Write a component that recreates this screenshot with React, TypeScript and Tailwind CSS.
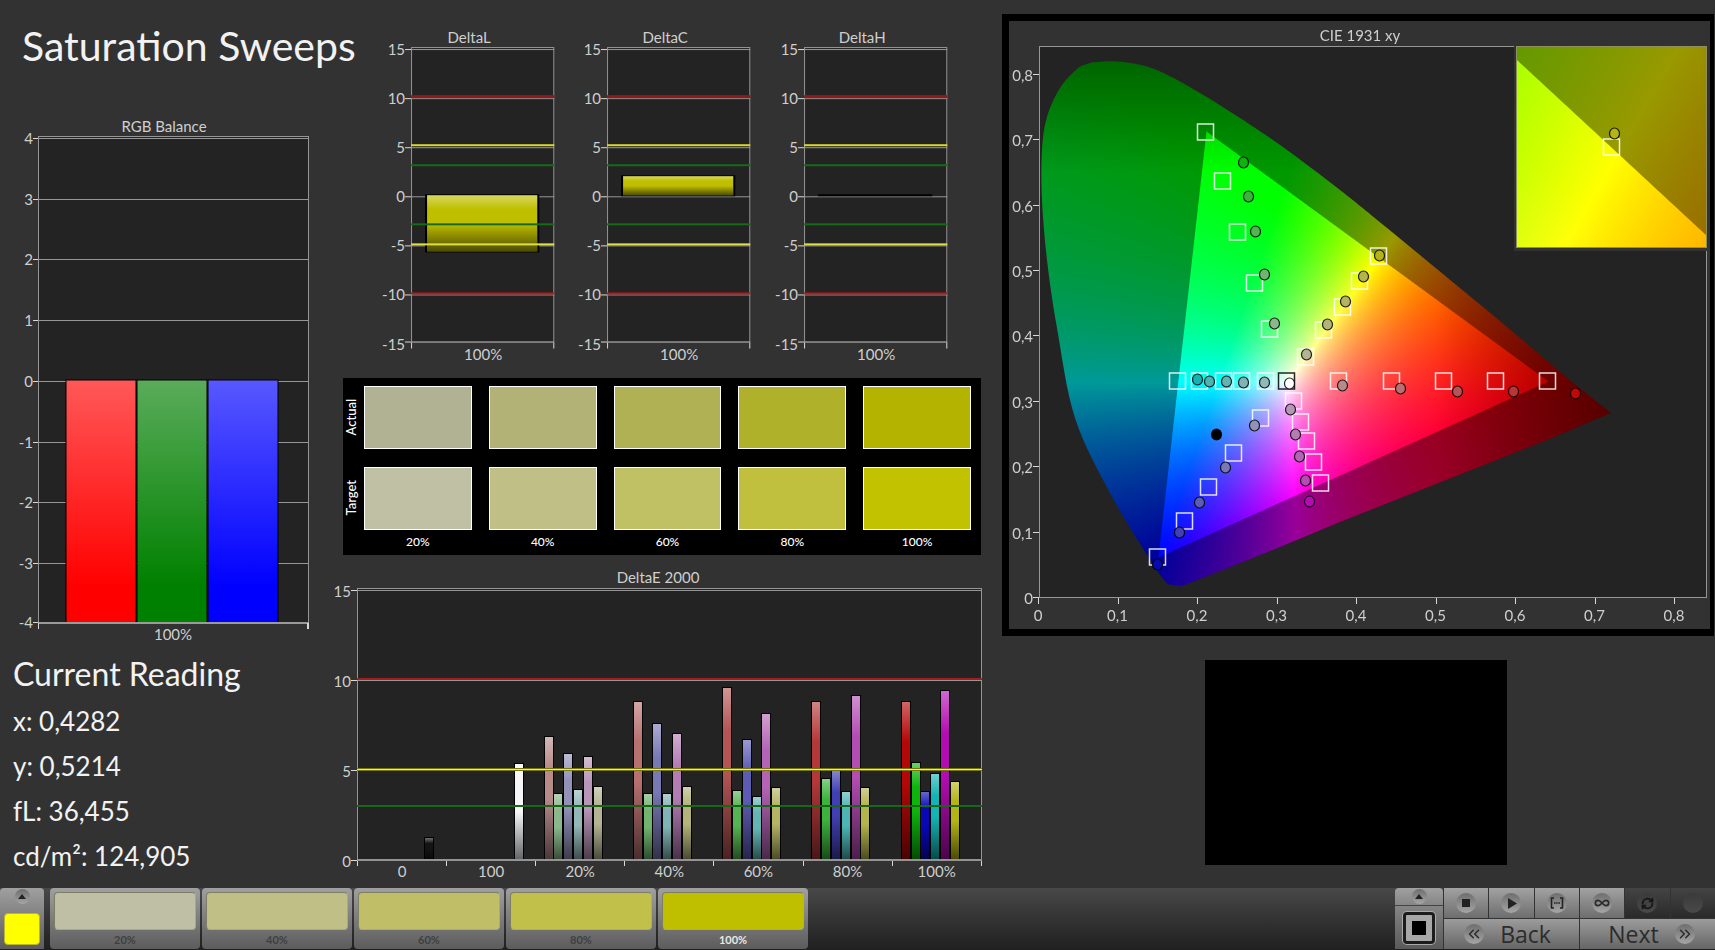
import { useLayoutEffect, useRef } from "react";
import type { ReactNode } from "react";
import { ChevronsLeft, ChevronsRight, Infinity as InfinityIcon, RefreshCw } from "lucide-react";

type Point = [number, number];

const GRID = "#969696";
const TICK = "#d8d8d8";
const PLOT = "#232323";
const LABEL = "#cfcfcf";

const range = (n: number) => Array.from({ length: n }, (_, i) => i);

function Label({ x, y, anchor = "middle", children }: { x: number; y: number; anchor?: "start" | "middle" | "end"; children: ReactNode }) {
  return (
    <text x={x} y={y} textAnchor={anchor} fill={LABEL} className="text-[15px]">
      {children}
    </text>
  );
}

function HLine({ x1, x2, y, color = GRID, width = 1 }: { x1: number; x2: number; y: number; color?: string; width?: number }) {
  return <rect x={x1} y={y} width={x2 - x1} height={width} fill={color} />;
}

/* Glossy shading laid over every bar */
function Gloss({ id }: { id: string }) {
  return (
    <linearGradient id={id} x1="0" y1="0" x2="0" y2="1">
      <stop offset="0" stopColor="#fff" stopOpacity="0.38" />
      <stop offset="0.25" stopColor="#fff" stopOpacity="0" />
      <stop offset="0.5" stopColor="#000" stopOpacity="0" />
      <stop offset="1" stopColor="#000" stopOpacity="0.6" />
    </linearGradient>
  );
}

function RgbBalance() {
  const bars = [
    { id: "r", x: 66, from: "#ff5858", to: "#ff0000" },
    { id: "g", x: 137, from: "#5aac5a", to: "#008000" },
    { id: "b", x: 208, from: "#5858ff", to: "#0000ff" },
  ];
  return (
    <svg viewBox="0 110 320 540" className="w-full" role="img" aria-label="RGB Balance">
      <defs>
        {bars.map((b) => (
          <linearGradient key={b.id} id={`rgb-${b.id}`} x1="0" y1="0" x2="0" y2="1">
            <stop offset="0" stopColor={b.from} />
            <stop offset="0.85" stopColor={b.to} />
          </linearGradient>
        ))}
      </defs>
      <Label x={164} y={132}>RGB Balance</Label>
      <rect x={38} y={136} width={271} height={487} fill={PLOT} />
      {range(9).map((i) => {
        const y = Math.min(Math.round(138 + i * 60.7), 622);
        return (
          <g key={i}>
            <HLine x1={33} x2={38} y={y} color={TICK} />
            <HLine x1={38} x2={309} y={y} />
            <Label x={33} y={y + 6} anchor="end">{4 - i}</Label>
          </g>
        );
      })}
      {bars.map((b) => (
        <rect key={b.id} x={b.x} y={380} width={70} height={243} fill={`url(#rgb-${b.id})`} stroke="#000" />
      ))}
      <rect x={38.5} y={136.5} width={270} height={486} fill="none" stroke={GRID} />
      <HLine x1={38} x2={309} y={622} width={2} color="#9a9a9a" />
      <rect x={38} y={623} width={1} height={6} fill={TICK} />
      <rect x={307} y={623} width={2} height={6} fill={TICK} />
      <Label x={173} y={640}>100%</Label>
    </svg>
  );
}

const LIMITS = [
  { y: 95, color: "#8e1a1a", width: 3 },
  { y: 144, color: "#d8d82e", width: 2 },
  { y: 164, color: "#176a17", width: 2 },
  { y: 223, color: "#176a17", width: 2 },
  { y: 243, color: "#dede48", width: 2 },
  { y: 292, color: "#b01c1c", width: 2 },
];

function DeltaChart({ title, top, bottom }: { title: string; top: number; bottom: number }) {
  return (
    <svg viewBox="0 24 196 350" className="w-full" role="img" aria-label={title}>
      <defs>
        <Gloss id={`gloss-${title}`} />
      </defs>
      <Label x={93} y={43}>{title}</Label>
      <rect x={35} y={47} width={143} height={295} fill={PLOT} />
      {range(7).map((i) => {
        const y = i === 6 ? 341 : 49 + i * 49;
        return (
          <g key={i}>
            <HLine x1={29} x2={35} y={y} color={TICK} />
            <HLine x1={35} x2={178} y={y} />
            <Label x={29} y={49 + i * 49 + 6} anchor="end">{15 - i * 5}</Label>
          </g>
        );
      })}
      <rect x={35.5} y={47.5} width={142} height={294} fill="none" stroke={GRID} />
      <rect x={49} y={top} width={114} height={bottom - top} fill="#000" />
      {bottom - top > 3 && (
        <>
          <rect x={51} y={top + 1} width={110} height={bottom - top - 2} fill="#bfbf00" />
          <rect x={51} y={top + 1} width={110} height={bottom - top - 2} fill={`url(#gloss-${title})`} />
        </>
      )}
      {LIMITS.map((l) => (
        <HLine key={l.y} x1={35} x2={178} y={l.y} color={l.color} width={l.width} />
      ))}
      <rect x={35} y={342} width={1} height={6} fill={TICK} />
      <rect x={177} y={342} width={1} height={6} fill={TICK} />
      <Label x={107} y={359}>100%</Label>
    </svg>
  );
}

const LEVELS = ["20%", "40%", "60%", "80%", "100%"];
const ACTUAL = ["bg-[#b1b194]", "bg-[#b2b276]", "bg-[#b0b154]", "bg-[#b0b12b]", "bg-[#b3b300]"];
const TARGET = ["bg-[#c0c0a5]", "bg-[#c0bf86]", "bg-[#c0c065]", "bg-[#c0c03e]", "bg-[#c2c200]"];

function Swatches() {
  const rows = [
    { name: "Actual", fills: ACTUAL },
    { name: "Target", fills: TARGET },
  ];
  return (
    <section className="mt-[3px] mr-[21px] ml-[23px] bg-black pt-2 pr-[10px] pb-1 text-white">
      <div className="flex flex-col gap-[18px]">
        {rows.map((row) => (
          <div key={row.name} className="flex">
            <div className="flex w-[21px] items-center">
              <span className="rotate-180 text-[13px] leading-4 font-medium [writing-mode:vertical-rl]">{row.name}</span>
            </div>
            <div className="grid flex-1 grid-cols-5 gap-[17px]">
              {row.fills.map((fill) => (
                <div key={fill} className={`h-[63px] border border-white ${fill}`} />
              ))}
            </div>
          </div>
        ))}
      </div>
      <div className="ml-[21px] grid grid-cols-5 gap-[17px] pt-[3px] text-center text-[12px] leading-[18px] font-medium">
        {LEVELS.map((l) => (
          <span key={l}>{l}</span>
        ))}
      </div>
    </section>
  );
}

const GROUPS = [
  { values: [6.93, 3.76, 5.98, 4.02, 5.81, 4.19], colors: ["#b88a8a", "#8ab88a", "#9292b8", "#94b8b8", "#b896b8", "#b4b494"] },
  { values: [8.89, 3.76, 7.67, 3.76, 7.09, 4.19], colors: ["#b87070", "#70b470", "#7878b4", "#80b4b4", "#b47cb4", "#b4b47a"] },
  { values: [9.65, 3.93, 6.76, 3.59, 8.2, 4.09], colors: ["#b45454", "#54b454", "#5c5cb4", "#64b4b4", "#b464b4", "#b4b464"] },
  { values: [8.89, 4.59, 5.09, 3.87, 9.2, 4.09], colors: ["#b43838", "#3cb43c", "#4040b4", "#4cb4b4", "#b44cb4", "#b4b44c"] },
  { values: [8.89, 5.5, 3.87, 4.87, 9.48, 4.43], colors: ["#b40808", "#0cb40c", "#0808b4", "#14b4b4", "#b40cb4", "#b4b414"] },
];

function DeltaE() {
  const bars = [
    { x: 424, value: 1.31, color: "#141414" },
    { x: 514, value: 5.43, color: "#f4f6f8" },
    ...GROUPS.flatMap((g, gi) =>
      g.values.map((value, i) => ({ x: Math.round(543.5 + gi * 89.3 + i * 9.8), value, color: g.colors[i] })),
    ),
  ];
  return (
    <svg viewBox="320 555 682 330" className="w-full" role="img" aria-label="DeltaE 2000">
      <defs>
        <Gloss id="gloss-e" />
      </defs>
      <Label x={658} y={583}>DeltaE 2000</Label>
      <rect x={357} y={588} width={625} height={273} fill={PLOT} />
      {range(4).map((i) => {
        const y = i === 3 ? 860 : 590 + i * 90;
        return (
          <g key={i}>
            <HLine x1={351} x2={357} y={y} color={TICK} />
            <HLine x1={357} x2={982} y={y} />
            <Label x={351} y={597 + i * 90} anchor="end">{15 - i * 5}</Label>
          </g>
        );
      })}
      <rect x={357.5} y={588.5} width={624} height={272} fill="none" stroke={GRID} />
      {bars.map((b) => {
        const y = Math.round(861 - b.value * 18);
        return (
          <g key={b.x}>
            <rect x={b.x} y={y} width={10} height={860 - y} fill="#000" />
            <rect x={b.x + 1} y={y + 1} width={8} height={859 - y} fill={b.color} />
            <rect x={b.x + 1} y={y + 1} width={8} height={859 - y} fill="url(#gloss-e)" />
          </g>
        );
      })}
      <HLine x1={357} x2={982} y={678} color="#a81c1c" width={2} />
      <HLine x1={357} x2={982} y={768} color="#77770c" width={3} />
      <HLine x1={357} x2={982} y={769} color="#f0f060" />
      <HLine x1={357} x2={982} y={805} color="#186618" width={2} />
      <HLine x1={357} x2={982} y={859} color="#949494" width={2} />
      {range(8).map((i) => (
        <rect key={i} x={Math.round(357 + i * 89.1)} y={861} width={1} height={5} fill={TICK} />
      ))}
      {["0", "100", ...LEVELS].map((l, i) => (
        <Label key={i} x={402 + i * 89.1} y={877}>{l}</Label>
      ))}
    </svg>
  );
}

/* Chromaticity diagram */

const ORIGIN: Point = [1039, 597];
const SCALE: Point = [794.4, 654.3];
const GREEN: Point = [1206, 131];
const RED: Point = [1548, 381];
const BLUE: Point = [1158, 557];

const LOCUS: Point[] = [
  [1097, 62], [1123, 62], [1157, 70], [1200, 93], [1240, 118], [1283, 147], [1340, 190], [1392, 232],
  [1500, 321], [1573, 383], [1611, 413], [1547, 440], [1340, 522], [1280, 547], [1187, 584], [1180, 585],
  [1172, 585], [1165, 581], [1147, 555], [1110, 493], [1075, 418], [1057, 328], [1047, 260], [1042, 200],
  [1042, 150], [1047, 117], [1060, 88], [1077, 69], [1087, 64],
];

// linear sRGB from xy, brightest channel scaled to one, darker towards deep green and deep red
function chroma(x: number, y: number) {
  const z = 1 - x - y;
  const rgb = [
    3.2406 * x - 1.5372 * y - 0.4986 * z,
    -0.9689 * x + 1.8758 * y + 0.0415 * z,
    0.0557 * x - 0.204 * y + 1.057 * z,
  ].map((v) => Math.max(v, 0));
  const max = Math.max(...rgb);
  const fade = (1 - Math.max(0, x - 0.5) * 2) * (1 - Math.max(0, y - 0.65) * 2);
  return rgb.map((v) => (v / max) * 255 * fade);
}

// signed distance in pixels, positive to the right of a -> b on screen
function side(a: Point, b: Point, x: number, y: number) {
  const dx = b[0] - a[0];
  const dy = b[1] - a[1];
  return (dx * (y - a[1]) - dy * (x - a[0])) / Math.hypot(dx, dy);
}

const clamp = (v: number) => Math.min(1, Math.max(0, v));

function paint(
  canvas: HTMLCanvasElement | null,
  toXY: (px: number, py: number) => Point,
  inside: (px: number, py: number) => number,
) {
  const ctx = canvas?.getContext("2d");
  if (!canvas || !ctx) return;
  const { width, height } = canvas;
  const image = ctx.createImageData(width, height);
  for (let py = 0; py < height; py++) {
    for (let px = 0; px < width; px++) {
      const [x, y] = toXY(px, py);
      const level = 0.6 + 0.4 * clamp(inside(px, py) + 0.5);
      const [r, g, b] = chroma(x, y);
      image.data.set([r * level, g * level, b * level, 255], (py * width + px) * 4);
    }
  }
  ctx.putImageData(image, 0, 0);
}

function locusPath() {
  const n = LOCUS.length;
  const at = (i: number): Point => {
    const [x, y] = LOCUS[(i + n) % n];
    return [x - 1009, y - 21];
  };
  const path = new Path2D();
  path.moveTo(...at(0));
  for (let i = 0; i < n; i++) {
    const [p0, p1, p2, p3] = [at(i - 1), at(i), at(i + 1), at(i + 2)];
    // straight segments around the red tip
    if (i >= 7 && i <= 12) {
      path.lineTo(...p2);
      continue;
    }
    path.bezierCurveTo(
      p1[0] + (p2[0] - p0[0]) / 6, p1[1] + (p2[1] - p0[1]) / 6,
      p2[0] - (p3[0] - p1[0]) / 6, p2[1] - (p3[1] - p1[1]) / 6,
      p2[0], p2[1],
    );
  }
  path.closePath();
  return path;
}

const TARGETS: Point[] = [
  [1205, 132], [1222, 181], [1237, 232], [1254, 283], [1269, 329],
  [1378, 256], [1359, 281], [1342, 307], [1323, 330], [1305, 357],
  [1177, 381], [1199, 381], [1223, 381], [1241, 381], [1265, 381],
  [1338, 381], [1391, 381], [1443, 381], [1495, 381], [1547, 381],
  [1293, 401], [1300, 422], [1306, 441], [1313, 462], [1320, 483],
  [1260, 418], [1233, 453], [1208, 487], [1184, 521], [1157, 557],
];

const READINGS: [number, number, string][] = [
  [1243, 162, "#0cb40c"], [1248, 196, "#3cb43c"], [1255, 231, "#54b454"], [1264, 274, "#70b470"], [1274, 323, "#8ab88a"],
  [1379, 255, "#b4b414"], [1363, 276, "#b4b44c"], [1345, 301, "#b4b464"], [1327, 324, "#b4b47a"], [1306, 354, "#b4b494"],
  [1197, 379, "#14b4b4"], [1209, 381, "#4cb4b4"], [1226, 381, "#64b4b4"], [1243, 382, "#80b4b4"], [1264, 382, "#94b8b8"],
  [1342, 385, "#b88a8a"], [1400, 388, "#b87070"], [1457, 391, "#b45454"], [1513, 391, "#b43838"], [1575, 393, "#c00808"],
  [1290, 409, "#b896b8"], [1295, 434, "#b47cb4"], [1299, 456, "#b464b4"], [1305, 480, "#b44cb4"], [1309, 501, "#b40cb4"],
  [1254, 425, "#9292b8"], [1225, 467, "#7878b4"], [1199, 502, "#5c5cb4"], [1179, 532, "#4040b4"], [1157, 564, "#0808b4"],
  [1216, 434, "#000000"],
];

function Target({ x, y, color = "#fff" }: { x: number; y: number; color?: string }) {
  return <rect x={x - 7.5} y={y - 8} width={16} height={16} fill="none" stroke={color} strokeOpacity={0.85} strokeWidth={1.5} />;
}

function Reading({ x, y, fill }: { x: number; y: number; fill: string }) {
  return <ellipse cx={x + 0.5} cy={y + 0.5} rx={5} ry={5.5} fill={fill} stroke="#000" strokeOpacity={0.85} strokeWidth={1.2} />;
}

function Chromaticity() {
  const main = useRef<HTMLCanvasElement>(null);
  const inset = useRef<HTMLCanvasElement>(null);

  useLayoutEffect(() => {
    paint(
      main.current,
      (px, py) => [(px + 1009 - ORIGIN[0]) / SCALE[0], (ORIGIN[1] - py - 21) / SCALE[1]],
      (px, py) => {
        const x = px + 1009;
        const y = py + 21;
        return Math.min(side(GREEN, RED, x, y), side(RED, BLUE, x, y), side(BLUE, GREEN, x, y));
      },
    );
    const ctx = main.current?.getContext("2d");
    if (ctx) {
      ctx.globalCompositeOperation = "destination-in";
      ctx.fill(locusPath());
      ctx.globalCompositeOperation = "source-over";
    }
    paint(
      inset.current,
      (px, py) => [0.4262 + (px - 95) * 0.00029, 0.5205 - (py - 101) * 0.000275],
      (px, py) => side([0, 13], [189, 188], px, py),
    );
  }, []);

  return (
    <section className="relative mt-[14px] mr-px border-[7px] border-r-4 border-black">
      <svg viewBox="1009 21 701 608" className="w-full" aria-hidden="true">
        <rect x={1039.5} y={46.5} width={667} height={551} fill={PLOT} stroke={GRID} />
      </svg>
      <canvas ref={main} width={701} height={608} className="absolute inset-0 size-full" />
      <svg viewBox="1009 21 701 608" className="absolute inset-0 size-full" role="img" aria-label="CIE 1931 xy">
        <Label x={1360} y={41}>CIE 1931 xy</Label>
        {range(9).map((i) => (
          <g key={i}>
            <HLine x1={1033} x2={1039} y={Math.round(597 - i * 65.4)} color={TICK} />
            <Label x={1033} y={604 - i * 65.4} anchor="end">{i ? `0,${i}` : "0"}</Label>
            <rect x={Math.round(1038 + i * 79.5)} y={598} width={1} height={6} fill={TICK} />
            <Label x={1038 + i * 79.5} y={621}>{i ? `0,${i}` : "0"}</Label>
          </g>
        ))}
        {TARGETS.map(([x, y]) => (
          <Target key={`${x}-${y}`} x={x} y={y} />
        ))}
        <Target x={1286} y={381} color="#000" />
        {READINGS.map(([x, y, fill]) => (
          <Reading key={`${x}-${y}`} x={x} y={y} fill={fill} />
        ))}
        <Reading x={1289} y={383} fill="#fff" />
        <rect x={1514} y={46} width={196} height={205} fill="#323232" />
        <rect x={1516} y={46} width={191} height={202} fill="#8f8f5c" />
        <foreignObject x={1517} y={47} width={189} height={200}>
          <canvas ref={inset} width={189} height={200} className="block" />
        </foreignObject>
        <Target x={1611} y={147} />
        <Reading x={1614} y={133} fill="#b4b414" />
      </svg>
    </section>
  );
}

function Measure({ name, value }: { name: string; value: string }) {
  return (
    <p className="text-[26px] leading-[45px]">
      {name}: {value}
    </p>
  );
}

const FILMSTRIP = ["bg-[#bfbfa5]", "bg-[#c0bf86]", "bg-[#c0bf68]", "bg-[#c0c04a]", "bg-[#bfbf00]"];

function Knob({ small, dim, children }: { small?: boolean; dim?: boolean; children?: ReactNode }) {
  return (
    <span
      className={`flex items-center justify-center rounded-full bg-linear-to-b text-[#2b2b2b] ${small ? "size-[15px]" : "size-5"} ${
        dim ? "from-[#3a3a3a] to-[#4a4a4a]" : "from-[#6e6e6e] to-[#a6a6a6]"
      }`}
    >
      {children}
    </span>
  );
}

function UpArrow() {
  return (
    <svg viewBox="0 0 10 6" className="h-[5px] w-2" aria-hidden="true">
      <path d="M5 0 10 6H0z" fill="#222" />
    </svg>
  );
}

const SILVER = "bg-linear-to-b from-[#a0a0a0] to-[#5c5c5c]";
const KEY = "flex flex-1 items-center justify-center border-l border-[#333] bg-linear-to-b";

function Footer() {
  return (
    <footer className="mt-auto flex justify-between bg-linear-to-b from-[#484848] to-[#202020] pb-px">
      <div className="flex">
        <button className={`mr-1.5 flex w-11 flex-col items-center rounded-t-sm pt-[1px] ${SILVER}`} aria-label="Show colour">
          <Knob small>
            <UpArrow />
          </Knob>
          <span className="mt-[9px] h-8 w-9 rounded-sm border border-[#b8b82e] bg-[#ffff00]" />
        </button>
        <div className="flex gap-0.5">
          {LEVELS.map((l, i) => (
            <button key={l} className={`w-[150px] rounded-sm px-1 pt-1 ${SILVER}`}>
              <span className={`block h-[38px] rounded-sm border border-[#7e7e66] border-r-[#a8a890] border-b-[#a8a890] ${FILMSTRIP[i]}`} />
              <span className={`block h-[19px] text-[11px] leading-5 font-bold ${i === 4 ? "text-[#e8e8e8]" : "text-[#404040]"}`}>{l}</span>
            </button>
          ))}
        </div>
      </div>
      <div className="flex w-80">
        <div className="flex w-12 flex-col">
          <button className="flex h-[18px] items-center justify-center rounded-t-sm border-b border-[#444] bg-linear-to-b from-[#a0a0a0] to-[#868686]" aria-label="Expand">
            <Knob small>
              <UpArrow />
            </Knob>
          </button>
          <button className="flex flex-1 items-center justify-center bg-linear-to-b from-[#858585] to-[#5a5a5a]" aria-label="Pattern window">
            <span className="flex size-8 items-center justify-center rounded-sm border-[3px] border-[#1c1c1c] bg-[#a8a8a8] ring-1 ring-[#aaaaaa]">
              <span className="size-3.5 bg-black" />
            </span>
          </button>
        </div>
        <div className="flex flex-1 flex-col gap-px">
          <div className="flex h-[30px]">
            <button className={`${KEY} from-[#a2a2a2] to-[#6e6e6e]`} aria-label="Stop">
              <Knob><span className="size-2 bg-[#222]" /></Knob>
            </button>
            <button className={`${KEY} from-[#a2a2a2] to-[#6e6e6e]`} aria-label="Play">
              <Knob>
                <svg viewBox="0 0 10 12" className="ml-0.5 h-[11px] w-[9px]" aria-hidden="true"><path d="M0 0 10 6 0 12z" fill="#222" /></svg>
              </Knob>
            </button>
            <button className={`${KEY} from-[#a2a2a2] to-[#6e6e6e]`} aria-label="Read series">
              <Knob>
                <svg viewBox="0 0 14 12" className="h-3 w-3.5" fill="none" stroke="#222" strokeWidth="1.6" aria-hidden="true">
                  <path d="M4 1H1.500v10H4M10 1h2.500v10H10" />
                  <path d="M4 6h1.500M6.200 6h1.500M8.500 6h1.500" />
                </svg>
              </Knob>
            </button>
            <button className={`${KEY} from-[#a2a2a2] to-[#6e6e6e]`} aria-label="Read continuously">
              <Knob><InfinityIcon size={16} strokeWidth={2.5} /></Knob>
            </button>
            <button className={`${KEY} from-[#444444] to-[#2a2a2a]`} aria-label="Refresh">
              <Knob dim><RefreshCw size={13} strokeWidth={3.5} color="#161616" /></Knob>
            </button>
            <button className={`${KEY} from-[#444444] to-[#2a2a2a]`} aria-label="Record">
              <Knob dim />
            </button>
          </div>
          <div className="flex h-[30px] text-[23px] leading-[30px] text-[#2c2c2c] [font-family:'Open_Sans',sans-serif]">
            <button className={`${KEY} gap-4 pr-2 from-[#9c9c9c] to-[#666666]`}>
              <Knob><ChevronsLeft size={18} /></Knob>
              Back
            </button>
            <button className={`${KEY} gap-4 pl-2 from-[#9c9c9c] to-[#666666]`}>
              Next
              <Knob><ChevronsRight size={18} /></Knob>
            </button>
          </div>
        </div>
      </div>
    </footer>
  );
}

export default function App() {
  return (
    <div className="flex min-h-screen flex-col bg-[#323232] text-[#f2f2f2] [font-family:Lato,sans-serif]">
      <main className="grid grid-cols-[minmax(0,320fr)_minmax(0,682fr)_minmax(0,713fr)] items-start">
        <div>
          <h1 className="h-[110px] pt-5 pl-[22px] text-[41px] leading-[52px] whitespace-nowrap">Saturation Sweeps</h1>
          <RgbBalance />
          <section className="pl-[13px]">
            <h2 className="pt-1 pb-[5px] text-[32px] leading-10">Current Reading</h2>
            <Measure name="x" value="0,4282" />
            <Measure name="y" value="0,5214" />
            <Measure name="fL" value="36,455" />
            <Measure name="cd/m²" value="124,905" />
          </section>
        </div>
        <div>
          <div className="grid grid-cols-3 pt-6 pr-[37px] pl-14">
            <DeltaChart title="DeltaL" top={194} bottom={252} />
            <DeltaChart title="DeltaC" top={175} bottom={196} />
            <DeltaChart title="DeltaH" top={194} bottom={196} />
          </div>
          <Swatches />
          <DeltaE />
        </div>
        <div>
          <Chromaticity />
          <div className="mt-6 ml-[203px] h-[205px] w-[302px] bg-black" />
        </div>
      </main>
      <Footer />
    </div>
  );
}
